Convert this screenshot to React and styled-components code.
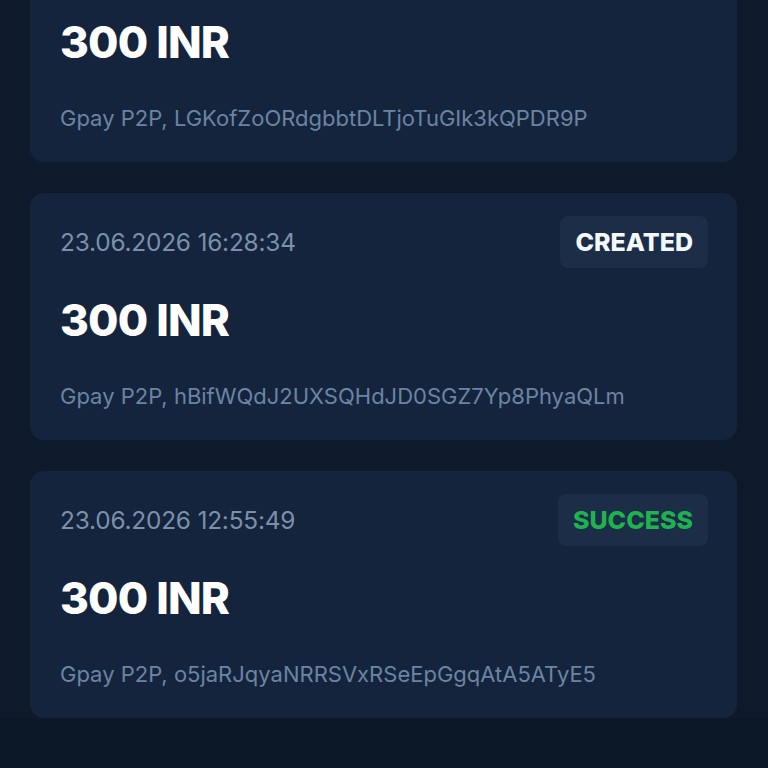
import React from 'react';
import styled, { createGlobalStyle } from 'styled-components';

const GlobalStyle = createGlobalStyle`
  html, body {
    margin: 0;
    padding: 0;
    background: #0c1727;
  }
  body {
    font-family: Inter, "Noto Sans", Arial, sans-serif;
    -webkit-font-smoothing: antialiased;
  }
`;

const transactions = [
  { id: 1, date: '23.06.2026 17:02:11', amount: '300 INR', method: 'Gpay P2P', ref: 'LGKofZoORdgbbtDLTjoTuGIk3kQPDR9P', status: 'created' },
  { id: 2, date: '23.06.2026 16:28:34', amount: '300 INR', method: 'Gpay P2P', ref: 'hBifWQdJ2UXSQHdJD0SGZ7Yp8PhyaQLm', status: 'created' },
  { id: 3, date: '23.06.2026 12:55:49', amount: '300 INR', method: 'Gpay P2P', ref: 'o5jaRJqyaNRRSVxRSeEpGgqAtA5ATyE5', status: 'success' },
];

const App = () => (
  <>
    <GlobalStyle />
    <Page>
      <List>
        {transactions.map((tx) => (
          <Card key={tx.id}>
            <TopRow>
              <DateText>{tx.date}</DateText>
              <Badge status={tx.status}>{tx.status.toUpperCase()}</Badge>
            </TopRow>
            <Amount>{tx.amount}</Amount>
            <Details>{tx.method}, {tx.ref}</Details>
          </Card>
        ))}
      </List>
    </Page>
  </>
);

const Page = styled.div`
  width: 768px;
  height: 768px;
  overflow: hidden;
  background: #0c1727;
`;

const List = styled.div`
  display: flex;
  flex-direction: column;
  gap: 31px;
  padding: 0 31px 0 30px;
  margin-top: -85px;
  background: #0e1a2c;
`;

const Card = styled.div`
  height: 247px;
  box-sizing: border-box;
  background: #13243c;
  border-radius: 14px;
  padding: 23px 29px 0 30px;
  display: flex;
  flex-direction: column;
`;

const TopRow = styled.div`
  display: flex;
  align-items: center;
  justify-content: space-between;
  height: 52px;
`;

const DateText = styled.span`
  font-size: 24.4px;
  color: #7c90ab;
  letter-spacing: -0.2px;
`;

const Badge = styled.span`
  height: 52px;
  box-sizing: border-box;
  padding: 0 15px;
  display: flex;
  align-items: center;
  border-radius: 8px;
  background: #1b2d47;
  font-size: 25px;
  font-weight: 800;
  color: ${(p) => (p.status === 'success' ? '#1fb24e' : '#f4f7fb')};
`;

const Amount = styled.div`
  margin-top: 26px;
  font-size: 44px;
  font-weight: 800;
  line-height: 52px;
  color: #ffffff;
  letter-spacing: -0.8px;
`;

const Details = styled.div`
  margin-top: 37px;
  font-size: 22px;
  color: #6b84a3;
`;

export default App;
